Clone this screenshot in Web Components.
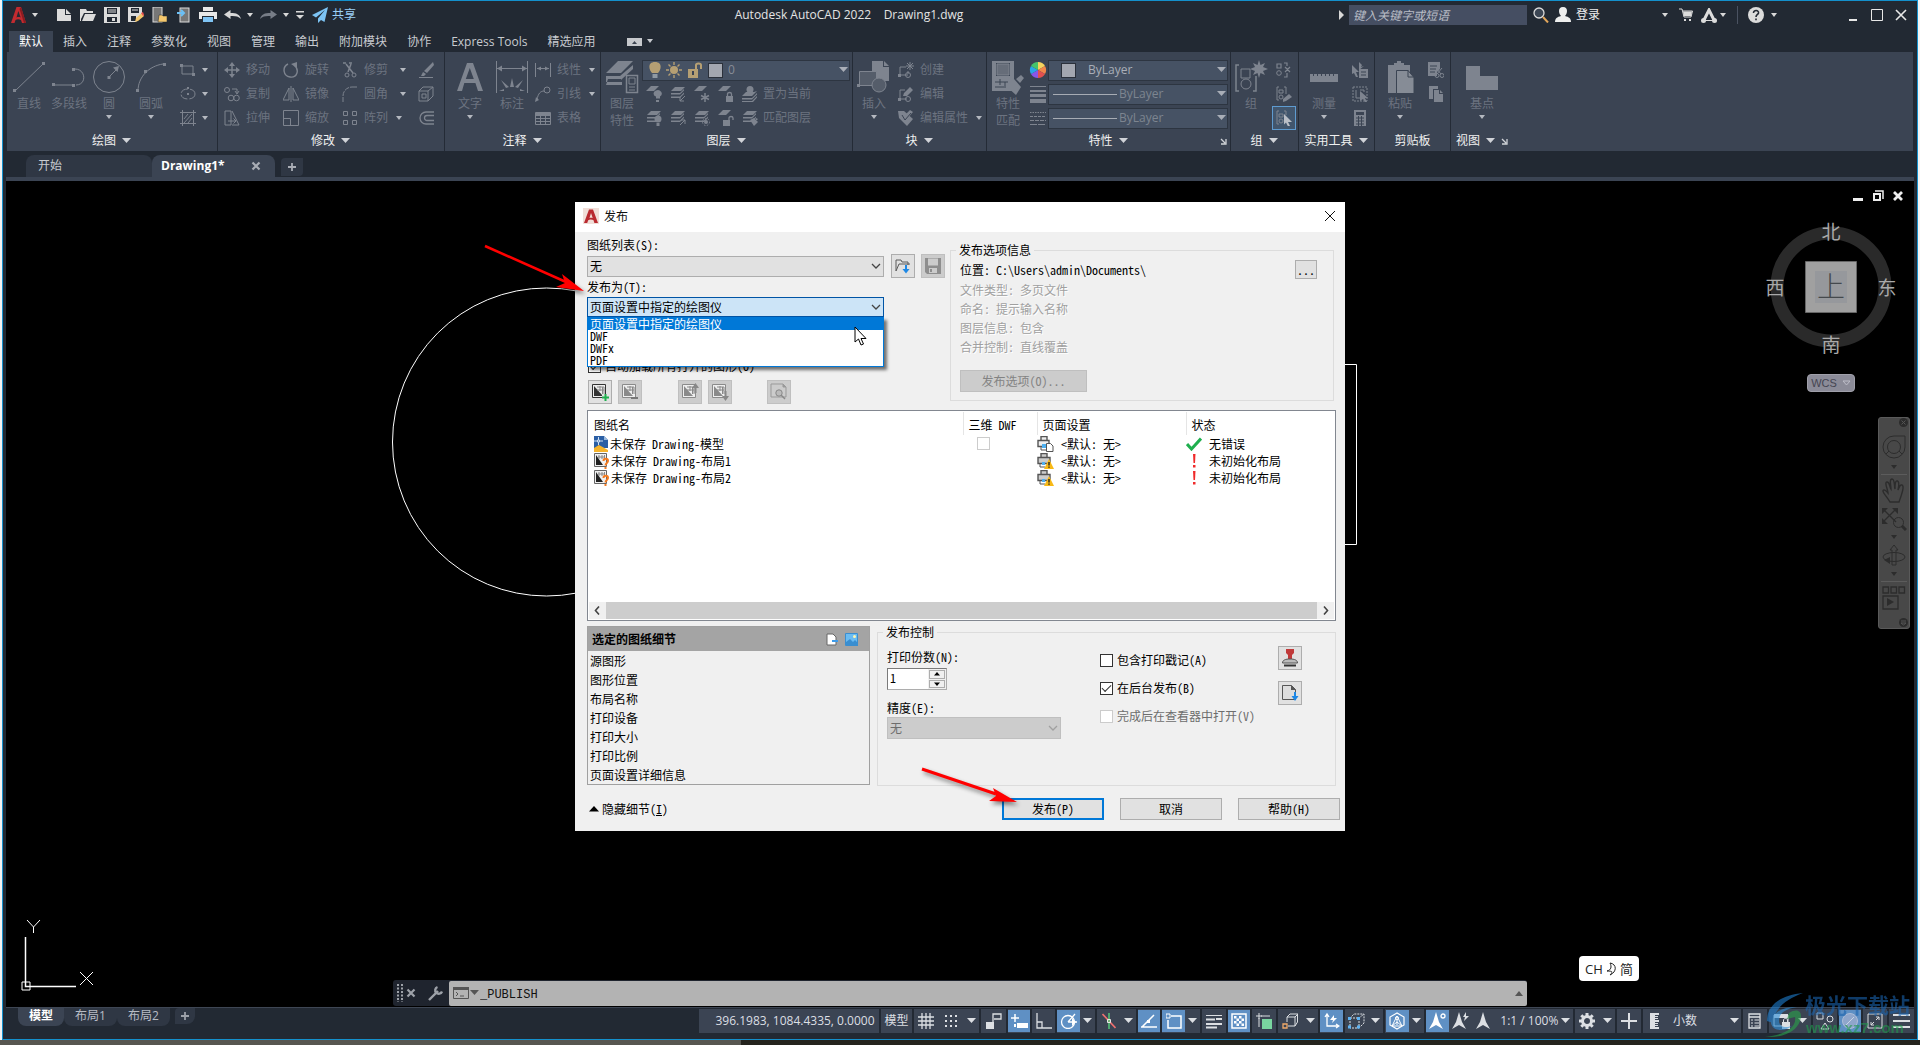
<!DOCTYPE html>
<html lang="zh-CN">
<head>
<meta charset="utf-8">
<title>Autodesk AutoCAD 2022 - Drawing1.dwg</title>
<style>
html,body{margin:0;height:100%}
body{background:linear-gradient(#f4f4f4,#f4f4f4) left top/100% calc(100% - 5px) no-repeat,linear-gradient(90deg,#575650 0 741px,#24231d 741px);overflow:hidden;
font-family:"Open Sans","Noto Sans CJK SC",sans-serif;font-size:12px;line-height:16px;color:#e0e0e0}
</style>
</head>
<body>
<cad-app></cad-app>
<script>
const RESET = `*{box-sizing:border-box}
button,input,select{font:inherit;color:inherit;background:none;border:0;padding:0;margin:0;border-radius:0;outline:0}
button{display:inline-flex;align-items:center;justify-content:center}
a{color:inherit;text-decoration:none}`;
const def = (name, css, html, after) => customElements.define(name, class extends HTMLElement {
  connectedCallback() {
    if (this.shadowRoot) return;
    const root = this.attachShadow({mode: 'open'});
    root.innerHTML = `<style>${RESET}${css}</style>${typeof html === 'function' ? html(this) : html}`;
    if (after) after(root, this);
  }
});

/* Icons: [width, height, markup] */
const F = 'fill="currentColor" stroke="none"';
const sheets = (y = 0) => `<g ${F}><path d="M5 ${1+y}h10l-4 4H1z"/><path d="M1 ${7+y}h9l4-4v1.500l-4 4H1z"/><path d="M1 ${10.500+y}h9l4-4V8l-4 4H1z"/></g>`;
const sheet = (tone, badge) => [18, 18, `<path d="M1.500 1.500h13v13h-13z" fill="#eee" stroke="${tone}"/><path d="M3 3v10h9z" fill="${tone}" stroke="none"/><path d="M6 4h7v7M9 3v5M6 7h7M11.500 4v7" stroke="#888"/>${badge}`];
const ICONS = {
  caret: [8, 5, `<path ${F} d="M1 0h6L4 4z"/>`],
  caretbig: [11, 6, `<path ${F} d="M1 0h9L5.500 5z"/>`],
  logo: [16, 18, `<path fill="#c22b30" stroke="none" d="M5.500 1h4.500L15 17h-4l-1-3c-2-1-4-1-5.500 0L3.500 17H0z"/><path fill="#232933" stroke="none" d="M7.300 5 5.500 11.500c1.500-.6 3-.6 4.200 0z"/><path fill="#8a1c20" stroke="none" d="M10 1l5 16h-2L8.500 3z"/>`],
  logodlg: [16, 16, `<path fill="#f0ded8" stroke="none" d="M0 0h16v16H0z"/><path fill="#b92a30" stroke="none" d="M6 1.500h4L15 15h-3.600l-1-3c-2-.8-4-.8-5.200.3L4.200 15H1z"/><path fill="#f0ded8" stroke="none" d="M8 5 6.500 10c1-.4 2.200-.4 3.200 0z"/>`],
  new: [16, 16, `<path fill="#dcdcdc" stroke="none" d="M1 2h8v6h6v6H1zM10 2l5 5h-5z"/>`],
  open: [16, 16, `<path fill="#dcdcdc" stroke="none" d="M0 2h6l1 2h6v2H4L1 12v2H0z"/><path fill="#dcdcdc" stroke="none" d="M5 7h11l-3 7H2z"/>`],
  save: [16, 16, `<path fill="#dcdcdc" stroke="none" fill-rule="evenodd" d="M0 0h16v16H0zM3 1h10v6H3zM3 10h10v5H3z"/><path d="M4 3h8M4 5h8" stroke="#dcdcdc"/><path fill="#dcdcdc" stroke="none" d="M8 11h3v3H8z"/>`],
  saveas: [16, 16, `<path fill="#dcdcdc" stroke="none" fill-rule="evenodd" d="M0 0h14v6l-6 9H0zM3 1h8v5H3zM3 9h5v5H3z"/><path d="M4 3h6" stroke="#dcdcdc"/><path d="m7 15 1-4 6-5 2 3-6 5z" fill="#f4c76d" stroke="none"/><path d="m13 6 2 3 1-1-1-3z" fill="#e55" stroke="none"/>`],
  openweb: [16, 16, `<rect x="1" y="0" width="9" height="15" fill="#777" stroke="#dcdcdc"/><path d="M7 8h3l1 1h4v6H6z" fill="#f4c76d" stroke="#232933" stroke-width=".5"/>`],
  saveweb: [14, 16, `<rect x="3" y="1" width="9" height="14" fill="#777" stroke="#dcdcdc"/><path d="M0 6h6M4 3l3 3-3 3" stroke="#6cc0f5" stroke-width="2"/>`],
  print: [18, 16, `<path fill="#e8e8e8" stroke="none" d="M4 0h10v4H4zM0 5h18v7h-3V9H3v3H0z"/><path fill="#7fc4f5" stroke="none" d="M4 10h10v5H4z"/>`],
  undo: [17, 10, `<path ${F} d="M0 4.500 6.500 0v3c6 0 9 1 10.500 6-3-3-6-3.200-10.500-3v3z"/>`],
  redo: [17, 10, `<path ${F} d="M17 4.500 10.500 0v3C4.500 3 1.500 4 0 9c3-3 6-3.200 10.500-3v3z"/>`],
  custom: [10, 8, `<path ${F} d="M1 0h8v1.500H1zM1 4h8L5 8z"/>`],
  plane: [16, 16, `<path fill="#7cc3f4" stroke="none" d="M16 0 0 8l4 2.500L13 3l-7 8.500V16l3-3 3.500 2z"/>`],
  right: [6, 10, `<path ${F} d="M0 0l5 5-5 5z"/>`],
  search: [16, 16, `<circle cx="6" cy="6" r="5" fill="#3c4654" stroke="#dcdcdc" stroke-width="1.300"/><path d="m10 10 5 5.500" stroke="#e2a65b" stroke-width="2"/>`],
  user: [16, 16, `<path ${F} d="M8 0c3 0 4 2 4 4s-1 4-2 5c4 1 6 2.500 6 6H0c0-3.500 2-5 6-6-1-1-2-3-2-5s1-4 4-4z"/>`],
  cart: [14, 14, `<path d="M0 1h3l2 8h7l1.500-6H4" stroke="#dcdcdc"/><path fill="#dcdcdc" stroke="none" d="M4 3.500h9l-1 4.500H5zM5 11h2v2H5zM10 11h2v2h-2z"/>`],
  autodesk: [16, 15, `<path d="M3 12 8 2l5 10" stroke="#dcdcdc" stroke-width="3"/><path d="M3 12.500h10" stroke="#dcdcdc"/><circle cx="2.500" cy="12.500" r="2.500" fill="#dcdcdc" stroke="none"/><circle cx="13.500" cy="12.500" r="2.500" fill="#dcdcdc" stroke="none"/>`],
  help: [18, 18, `<circle cx="9" cy="9" r="8" fill="#dcdcdc" stroke="none"/><path d="M6.500 7c0-3.500 5.500-3 5 0-.3 1.500-2.500 1.500-2.500 4M9 12.500v1.800" stroke="#232933" stroke-width="1.600"/>`],
  min: [12, 14, `<path d="M2 12h8" stroke="#e8e8e8" stroke-width="2"/>`],
  max: [14, 12, `<path d="M1.500.5h11v11h-11z" stroke="#e8e8e8"/>`],
  close: [12, 12, `<path d="m1 1 10 10M11 1 1 11" stroke="#e8e8e8" stroke-width="1.600"/>`],
  ribbonmin: [15, 8, `<path fill="#c6c8cc" stroke="none" d="M0 0h15v8H0z"/><path fill="#3c4350" stroke="none" d="M5 6l2.500-3L10 6z"/>`],
  line: [34, 34, `<path d="M3 31 31 4"/><path ${F} d="M1 29h3v3H1zM30 2h3v3h-3z"/>`],
  pline: [34, 34, `<path d="M2 25h20M23 9c11 0 12 16 1 16"/><path ${F} d="M0 23h3v3H0zM20 24h3v3h-3zM20 8h3v3h-3z"/>`],
  circle: [34, 34, `<circle cx="17" cy="17" r="15.500"/><path d="M17 17 26 8"/><path ${F} d="M15.500 16h3v3h-3zM27 6l-1.500 6L21 7.500z"/>`],
  arc: [34, 34, `<path d="M4 31C4 17 15 6 29 4"/><path ${F} d="M2 29h3v3H2zM10 10h3v3h-3zM29 3h3v3h-3z"/>`],
  rect: [16, 16, `<path d="M2 4h11M2 4v8h11V4"/><path ${F} d="M0 2h3v3H0zM12 11h3v3h-3z"/>`],
  ellipse: [16, 16, `<ellipse cx="8" cy="8" rx="7" ry="5" stroke-dasharray="8 2"/><path ${F} d="M7 7h2v2H7zM7 1h2v2H7z"/>`],
  hatch: [16, 16, `<path d="M2.500 0v16M13.500 0v16M0 2.500h16M0 13.500h16M4 9l4-5M4 13l8-9M8 13l4-5"/>`],
  move: [16, 16, `<path d="M8 2v12M2 8h12" stroke-width="1.500"/><path ${F} d="M8 0l3 4H5zM8 16l-3-4h6zM0 8l4-3v6zM16 8l-4 3V5z"/>`],
  copy: [16, 16, `<circle cx="3" cy="4" r="2.500"/><circle cx="7" cy="12" r="2.800"/><circle cx="12.500" cy="12" r="2.800"/><path d="M8 3h5v4M11 5l2 3 2-3"/>`],
  stretch: [16, 16, `<path d="M1 1h6v14H1zM8 1l7 14H8M4 11h8M9.500 8.500 12 11l-2.500 2.500"/>`],
  rotate: [16, 16, `<path d="M5 2C-1 5 0 14 7 15s10-7 4-12" stroke-width="1.400"/><path ${F} d="M14 0v6L8 2z"/>`],
  mirror: [16, 16, `<path d="M6 2v12H0zM10 2v12h6zM8 0v16"/>`],
  scale: [16, 16, `<path d="M.5.5h15v15H.5zM.5 8.500h7v7"/>`],
  trim: [16, 16, `<path d="M1 1h3M7 1h3M4 2l7 9M9 2 6 10" stroke-width="1.500"/><circle cx="5" cy="13" r="2"/><circle cx="12" cy="13" r="2"/>`],
  fillet: [16, 16, `<path d="M1 16v-6M1 10C1 5 5 1 10 1M10 1h6" stroke-dasharray="5 1"/>`],
  array: [16, 16, `<path d="M1.500 1.500h4v4h-4zM10.500 1.500h4v4h-4zM1.500 10.500h4v4h-4zM10.500 10.500h4v4h-4z"/>`],
  erase: [16, 16, `<path ${F} d="m15 0 1 3-7 8-3-2zM5 10l3 2-2 2H3zM1 15h14v1H1z"/>`],
  explode: [16, 16, `<path d="M1 5h9v10H1zM1 5l4-4h10v9l-5 5M10 5l5-4M4 8h4v4H4z"/>`],
  offset: [16, 16, `<path d="M16 2H8a6 6 0 0 0 0 12h8M16 5.500H9a2.500 2.500 0 0 0 0 5h7" stroke-width="1.300"/>`],
  text: [30, 34, `<path ${F} d="M12 3h6l10 28h-5l-2.600-8H9.300L7 31H2zM14.800 8l-4 11h8z"/>`],
  dim: [34, 34, `<path d="M1.500 1v32M32.500 1v32M2 8.500h30"/><path ${F} d="M2 8.500l5-3v6zM32 8.500l-5 3v-6zM15 27l2-9 2 9zM11 28 6 20l8 7zM23 28l5-8-8 7zM9 31H4l5-2zM25 31h5l-5-2z"/>`],
  linear: [16, 16, `<path d="M.5 1v14M15.500 1v14M2 6.500h12"/><path ${F} d="M2 6.500l4-2v4zM14 6.500l-4 2v-4z"/>`],
  leader: [16, 16, `<path d="M2 14C3 7 6 5 9 5"/><circle cx="12" cy="4" r="3"/><path ${F} d="M0 16l1-5 3 3z"/>`],
  table: [16, 16, `<path d="M.5 2.500h15v12H.5zM1 5.500h14M1 8.500h14M1 11.500h14M5.500 5v9M10.500 5v9"/><path ${F} d="M1 2h14v3H1z"/>`],
  layerprop: [34, 36, `<g ${F}><path d="M13 2h15L16 14H1zM1 17h14l13-11v4L17 20v3H1zM1 26h16v-5l-1-1H3z"/></g><path d="M21.500 16.500h11v17h-11z" fill="#3b4453" stroke-width="1.500"/><path d="M24 19h6v6h-6zM24 28h6M24 31h6"/>`],
  bulb: [12, 16, `<path fill="#b59f73" stroke="none" d="M6 0c8 0 6 8 3 11H3C0 8-2 0 6 0z"/><path fill="#8f99a3" stroke="none" d="M3.500 12h5v4h-5z"/>`],
  sun: [16, 16, `<circle cx="8" cy="8" r="4" fill="#b59f73" stroke="none"/><path d="M8 0v3M8 13v3M0 8h3M13 8h3M2.500 2.500l2 2M11.500 11.500l2 2M13.500 2.500l-2 2M4.500 11.500l-2 2" stroke="#b59f73" stroke-width="1.400"/>`],
  unlock: [16, 16, `<path fill="#b59f73" stroke="none" d="M1 7h10v9H1z"/><path d="M9 7V3c0-2 5-2 5 0v4" stroke="#b59f73" stroke-width="2"/><path fill="#3a4352" stroke="none" d="M5 9h2v4H5z"/>`],
  lOff: [16, 16, `<g ${F}><path d="M5 0h8L8 5H0zM8 9a4 3.500 0 1 1 6 1.500v2h-4v-2C8 10 8 9 8 9zM10 14h3v2h-3z"/></g>`],
  lIso: [16, 16, sheets() + `<path d="M10 15l5-5M10 11v4h4"/>`],
  lFrz: [16, 16, `<path ${F} d="M5 0h8L8 5H0z"/><path d="M11 7v9M7 9.500l8 4M15 9.500l-8 4" stroke-width="1.500"/>`],
  lLock: [16, 16, `<path ${F} d="M5 0h8L8 5H0zM8 10h7v6H8z"/><path d="M9.500 10V8c0-2 4-2 4 0v2" stroke-width="1.300"/>`],
  lCur: [16, 16, `<g ${F}><circle cx="8" cy="3.500" r="3.500"/><path d="M4 6h8l3-1-5 5H0zM0 12h10l5-5v1.500l-5 5H0zM0 15h10l5-5v1.500L11 16H0z"/></g>`],
  lOn: [16, 16, sheets() + `<circle cx="12" cy="9" r="3.500" ${F}/><path ${F} d="M10.500 13h3v3h-3z"/>`],
  lUniso: [16, 16, sheets() + `<path d="M10 15l5-5M11 10h4v4"/>`],
  lThaw: [16, 16, sheets() + `<circle cx="12" cy="12" r="2" ${F}/><circle cx="12" cy="12" r="3.500" stroke-dasharray="1.500 1.500"/>`],
  lUnlock: [16, 16, `<path ${F} d="M5 0h8L8 5H0zM5 10h7v6H5z"/><path d="M11 10V8c0-2 4-2 4 0v2" stroke-width="1.300"/>`],
  lMatch: [16, 16, sheets() + `<path ${F} d="M8 10l4 6 4-4-4-4zM14 8l2 1-2 2z"/>`],
  insert: [34, 34, `<path ${F} d="M15 1h11v6h6v14H15z"/><path ${F} d="M27 1l5 5h-5z"/><path d="M2.500 11.500h17v14h-17z" fill="#555d6a"/><circle cx="22" cy="25" r="7" fill="#555d6a"/><path ${F} d="M0 24h3v3H0z"/>`],
  create: [16, 16, `<path d="M2 13V5h6M2 13h8M10 12V9"/><circle cx="10" cy="13" r="2.500"/><path d="M12 0v8M8 4h8M9 1l6 6M15 1 9 7"/><path ${F} d="M0 12h3v3H0z"/>`],
  bedit: [16, 16, `<path d="M2 13V4h5M2 13h7"/><circle cx="10" cy="13" r="2.500"/><path ${F} d="M0 12h3v3H0zM5 10l1-3 6-6 3 3-6 6z"/>`],
  attr: [16, 16, `<path ${F} d="M0 1h6l9 8-6 7L1 8zM6 6l6-6 3 2-6 7z"/><path stroke="#3b4453" d="M4 5l3 5M7 10l6-7"/>`],
  matchprop: [34, 36, `<path ${F} fill-rule="evenodd" d="M1 2h22v30H1zM5 4v13h14V4zM5 26h6M5 21h14"/><path d="M6 5h12v11H6z" fill="#666d79"/><path d="M4 23h13M4 28h9M9 20v6M14 23v6" stroke="#3b4453"/><path ${F} d="M15 27l8-7 7 8-5 8zM25 20l5-4 3 3-4 5z" stroke="#3b4453"/>`],
  wheel: [18, 18, `<g stroke="none"><path fill="#f4d35e" d="M9 9V1a8 8 0 0 1 7 4z"/><path fill="#f2874a" d="M9 9l7-4a8 8 0 0 1 0 8z"/><path fill="#e2504f" d="M9 9l7 4a8 8 0 0 1-7 4z"/><path fill="#8a56e8" d="M9 9v8a8 8 0 0 1-7-4z"/><path fill="#2aa7e8" d="M9 9l-7 4a8 8 0 0 1 0-8z"/><path fill="#45c46b" d="M9 9 2 5a8 8 0 0 1 7-4z"/></g>`],
  lweight: [18, 18, `<path ${F} d="M1 1h16v1H1zM1 5h16v2H1zM1 9h16v3H1zM1 14h16v4H1z"/>`],
  ltype: [18, 18, `<path d="M1 3.500h16" stroke-dasharray="1.500 1"/><path d="M1 7.500h16" stroke-dasharray="3 1"/><path d="M1 11.500h16" stroke-dasharray="4 1"/><path d="M1 15.500h16" stroke-dasharray="7 1"/>`],
  group: [34, 34, `<path d="M5 5H2v26h3M19 31h3V16" stroke-width="1.500"/><path d="M7 9h9v9H7z"/><circle cx="12" cy="24" r="5"/><path ${F} d="m25 0 1.500 5L31 3l-2 4 5 2-5 2 2 4-4.500-2L25 18l-1.500-5-4.500 2 2-4-5-2 5-2-2-4 4.500 2z"/>`],
  ungroup: [16, 16, `<path d="M1 2h4v4H1zM8 1h3v3M8 15h3v-4M9 5l5 5M14 5l-5 5" stroke-width="1.200"/><circle cx="3" cy="11" r="2.300"/>`],
  gedit: [16, 16, `<path d="M3 1H1v13h2M8 1h2v7M3 4h4v3H3z"/><circle cx="5" cy="11" r="2"/><path ${F} d="M7 16v-3l6-5 3 3-6 4z"/>`],
  gsel: [16, 16, `<path d="M3 1H1v13h2M8 1h2v4M3 4h4v3H3z"/><circle cx="5" cy="11" r="2"/><path fill="#b9bec6" stroke="none" d="M8 4l8 8h-4l2 4-2 .5-2-4-2 2z"/>`],
  measure: [30, 34, `<path ${F} d="M1 14h28v8H1z"/><path stroke="#3b4453" d="M4.500 13v3M8.500 13v3M12.500 13v3M16.500 13v3M20.500 13v3M24.500 13v3"/>`],
  qsel: [16, 16, `<path ${F} d="M0 3l7 7H4l2 5H4l-2-4-2 1zM7 0l3 3-1 2 3-1-5 4zM7 7h9v9H7z"/><path stroke="#3b4453" d="M9 10h5M9 13h5"/>`],
  selall: [16, 16, `<path d="M1 1h14v14H1z" stroke-dasharray="2 1"/><path d="M4 4v8h4M8 4h4v2"/><path ${F} d="M8 5l8 7h-3l2 4h-2l-2-3-3 2z"/>`],
  calc: [16, 16, `<path ${F} fill-rule="evenodd" d="M2 0h12v16H2zM4 2v3h8V2z"/><path stroke="#3b4453" d="M4 8h8M4 11h8M4 14h8M6.500 6v10M9.500 6v10"/>`],
  paste: [30, 34, `<path ${F} d="M3 5h22v8H12v20H3zM9 3h3V1h4v2h3v4H9z"/><path fill="#868c96" stroke="#3b4453" d="M11.500 10.500H23l6 7v16H11.500z"/><path stroke="#3b4453" d="M23 10v7h6"/>`],
  cut: [16, 16, `<path ${F} d="M0 0h12v7l-3 3v4H0z"/><path stroke="#3b4453" d="M2 4h7M2 7h6M2 10h5"/><path d="M8 6l5 6M14 6l-5 6" /><circle cx="9" cy="13.500" r="2"/><circle cx="14" cy="13.500" r="2"/>`],
  copyclip: [16, 16, `<path ${F} d="M1 0h9v3H5v10H1z"/><path ${F} d="M6 4h5v4h4v8H6zM12 4l3 3h-3z"/>`],
  base: [34, 34, `<path ${F} d="M1 6h14v10h18v14H1z"/>`],
  launch: [7, 7, `<path d="M1 1l4 4M6 1v5H1" stroke-width="1.300"/>`],
  xtab: [10, 10, `<path d="m1.500 1.500 7 7M8.500 1.500l-7 7" stroke-width="2.200"/>`],
  plus: [10, 10, `<path d="M5 1v8M1 5h8" stroke-width="1.800"/>`],
  mdimin: [12, 12, `<path fill="#eee" stroke="none" d="M1 8h10v3H1z"/>`],
  mdimax: [12, 12, `<path d="M3 1h8v8" stroke="#eee" stroke-width="1.500"/><path d="M2 4h6v6H2z" stroke="#eee" stroke-width="2"/>`],
  mdiclose: [12, 12, `<path d="m2 2 8 8M10 2 2 10" stroke="#eee" stroke-width="2.800"/>`],
  steer: [24, 24, `<path d="M12 1h11v11A11 11 0 1 1 12 1z"/><circle cx="12" cy="12" r="6.500"/><path d="m7 16-3 3M17 16l3 3"/>`],
  hand: [26, 26, `<path stroke-width="1.400" d="M9 24C6 19 2 15 2 13s3-1 5 2c0-3-4-11-1-11s2 4 4 7c0-3-2-10 1-10s2 7 3 10c0-3 0-9 2.500-8s1 6 .5 9c1-2 2-6 4-5 3 1-1 11-3 17z"/>`],
  zoom: [26, 26, `<path d="m2 3 13 13M2 16 15 3" stroke-width="1.300"/><path ${F} d="M1 2h6L1 8zM17 2v6l-6-6zM1 18v-6l6 6z"/><circle cx="17.500" cy="16.500" r="5"/><path d="m21 20 4 4" stroke-width="3"/>`],
  orbit: [26, 26, `<path d="M13 2l4 5h-2v15h-4V7H9z"/><ellipse cx="13" cy="14" rx="11" ry="4.500"/><path ${F} d="M3 17l6-3v7z"/>`],
  motion: [26, 26, `<path d="M2 2h5.500v6H2zM10 2h5.500v6H10zM18 2h5.500v6H18zM2 11h15v13H2z" stroke-width="1.300"/><path ${F} d="M6 13l7 4-7 4z"/>`],
  navx: [9, 9, `<circle cx="4.500" cy="4.500" r="4.500" ${F}/><path stroke="#555" d="m2.500 2.500 4 4M6.500 2.500l-4 4"/>`],
  navm: [9, 9, `<circle cx="4.500" cy="4.500" r="4.500" ${F}/><path stroke="#555" d="M2 3h5M2 5h5L4.500 7z"/>`],
  grip: [6, 18, `<path stroke-width="2" stroke-dasharray="2 1.500" d="M1 0v18M5 0v18"/>`],
  wrench: [16, 16, `<path d="M1 15 10 6" stroke-width="2.400"/><path d="M14 6.500A3.500 3.500 0 1 1 9.500 2" stroke-width="2.400"/>`],
  prompt: [16, 12, `<path d="M.5.5h15v11H.5z"/><path ${F} d="M0 0h16v3H0z"/><path d="m3 5 2 2-2 2M7 9h4"/>`],
  up: [8, 5, `<path ${F} d="M0 5l4-5 4 5z"/>`],
  grid: [16, 16, `<path d="M4 0v16M8 0v16M12 0v16M0 4h16M0 8h16M0 12h16" stroke-width="1.300"/>`],
  snap: [14, 14, `<path stroke-width="2" stroke-dasharray="2 3" d="M1 2h12M1 7h12M1 12h12"/>`],
  infer: [16, 16, `<path ${F} d="M0 9h8v7H0z"/><path d="M7 10V1h8v5H8" stroke-width="1.300"/>`],
  dyn: [18, 16, `<path d="M5 1v8M1 5h8" stroke-width="1.500"/><path ${F} d="M7 10h11v5H7zM4 11h2v3H4z"/>`],
  ortho: [16, 16, `<path d="M1 0v15h15M1 9h5v6" stroke-width="1.300"/>`],
  polar: [18, 16, `<circle cx="8" cy="9" r="6.500" stroke-width="1.300"/><path d="M8 9h9M8 9l7-8" stroke-width="1.300"/><path ${F} d="M12 5l4 4-4 4z"/>`],
  iso: [14, 16, `<path stroke="#f07070" stroke-width="1.600" d="M.5 1l13 14"/><path stroke="#58d17b" stroke-width="1.400" d="M7 0v16"/><path d="M5.500 6.500h3v3h-3z" stroke="#e8e8e8"/>`],
  otrack: [18, 16, `<path d="M2 14 14 2M1 14h16" stroke-width="1.500"/><path ${F} d="M7 7h3v3H7z"/>`],
  osnap: [16, 16, `<path d="M5 3h10v12H2V7" stroke-width="1.500"/><path d="M0 1h4v4H0z"/>`],
  lw: [16, 16, `<path d="M0 2.500h16" stroke-width="1"/><path d="M0 6.500h9M10 6h6" stroke-width="2"/><path d="M0 11h16M0 14.500h11" stroke-width="2"/>`],
  trans: [16, 16, `<path d="M1 1h14v14H1z" stroke-width="1.500"/><path ${F} d="M3 3h2.500v2.500H3zM8 3h2.500v2.500H8zM5.500 5.500H8V8H5.500zM10.500 5.500H13V8h-2.500zM3 8h2.500v2.500H3zM8 8h2.500v2.500H8zM5.500 10.500H8V13H5.500zM10.500 10.500H13V13h-2.500z"/>`],
  cycle: [16, 16, `<path d="M3 0v6M0 3h6M5 3h9M3 5v9"/><path fill="#79d6a0" stroke="none" d="M6 6h10v10H6z"/>`],
  osnap3: [16, 16, `<path d="M5 4h8v9H6M5 4v5M5 4l3-3h8l-3 3M15.500 1v8L13 13"/><path stroke="#f0a96a" stroke-width="1.300" d="M1 11h4v4H1z"/>`],
  ducs: [16, 18, `<path d="M3 3v11h11M1 5l2-3 2 3M12 12l3 2-3 2" stroke-width="1.300"/><path ${F} d="M10 3 6 8h3l-1 3 5-5h-3z"/>`],
  selfilt: [18, 16, `<path d="M2 5h9v10H2zM2 5l4-4h10v9l-5 5M11 5l5-4" stroke-dasharray="2 1"/><path stroke="#5fb4f5" stroke-width="3" d="M0 5.500h3M0 14h3M9 14h3M9 5.500h3"/>`],
  gizmo: [18, 18, `<path d="M9 1 2 5v8l7 4 7-4V5z" stroke-width="1.200"/><circle cx="9" cy="6" r="1.500"/><path d="M9 7v6M9 10l-5 4M9 10l5 4M4 14h10L9 4z"/>`],
  annovis: [18, 18, `<path ${F} d="M7 0l3 10 4 7-7-4-7 4 4-7z"/><circle cx="14" cy="4" r="2" stroke-width="1.300"/>`],
  annoauto: [18, 18, `<path ${F} d="M7 0l3 10 4 7-7-4-7 4 4-7zM14 0l-3 5h2l-1 4 5-5h-3z"/>`],
  anno: [16, 18, `<path ${F} d="M7 0l3 10 4 7-7-4-7 4 4-7z"/>`],
  gear: [16, 16, `<circle cx="8" cy="8" r="4.500" stroke-width="3"/><path stroke-width="3" d="M8 0v3M8 13v3M0 8h3M13 8h3M2.300 2.300l2 2M11.700 11.700l2 2M13.700 2.300l-2 2M4.300 11.700l-2 2"/>`],
  bigplus: [16, 16, `<path d="M8 0v16M0 8h16" stroke-width="2"/>`],
  units: [10, 16, `<path ${F} d="M0 0h9v2H5v1h3v1H5v1h3v1H5v1h4v2H5v1h3v1H5v1h3v1H5v1h4v2H0z"/>`],
  qprops: [14, 16, `<path d="M1 1h11v14H1zM1 4h11" stroke-width="1.300"/><path d="M3 7h2M6.500 7H11M3 10h2M6.500 10H11M3 13h2M6.500 13H11"/>`],
  uilock: [18, 16, `<path d="M1 2h14v11H1z"/><path ${F} d="M1 1h14v4H1zM9 9h8v7H9z"/><path d="M10.500 9V7c0-2 4-2 4 0v2"/>`],
  isolate: [18, 18, `<path d="M1 1h6v6H1zM9 11l4 6H5z"/><circle cx="14" cy="7" r="3"/>`],
  hw: [18, 18, `<circle cx="9" cy="9" r="7.500" fill="#8fa6cb" stroke="#aebdd8"/><path stroke="#c9d4e6" d="M5 13l8-8"/>`],
  full: [16, 16, `<path d="M1 1h14v14H1zM9 4h3v3M12 4 9 7M7 12H4V9M4 12l3-3"/>`],
  menu: [18, 16, `<path d="M0 2h17M0 8h17M0 14h17" stroke-width="2"/>`],
  chev: [10, 8, `<path d="m1 2 4 4 4-4" stroke-width="1.300"/>`],
  dclose: [12, 12, `<path d="m1 1 10 10M11 1 1 11" stroke="#111"/>`],
  dload: [18, 18, `<path d="M2 14V3h5l1 2h6v3M2 14l3-7h11" stroke="#5a5a5a"/><path stroke="#1e88e5" stroke-width="2" d="M12 8v6"/><path fill="#1e88e5" stroke="none" d="M8.500 12h7L12 16.500z"/>`],
  dsave: [18, 18, `<path fill="#8e8e8e" stroke="none" fill-rule="evenodd" d="M1 1h16v16H3l-2-2zM4 1.500h10v7H4zM5 11h8v5H5z"/><path fill="#8e8e8e" stroke="none" d="M6 12h2v3H6z"/>`],
  sheetadd: sheet('#333', '<path d="M11 11h7v7h-7z" fill="#e1e1e1" stroke="none"/><path d="M14.500 11v7M11 14.500h7" stroke="#1faf4e" stroke-width="2"/>'),
  sheetdel: sheet('#8a8a8a', '<path d="M10 15h7" stroke="#777" stroke-width="2"/>'),
  sheetup: sheet('#8a8a8a', '<path d="M14.500 4v6" stroke="#888" stroke-width="2"/><path d="M11 5h7l-3.500-5z" fill="#888" stroke="none"/>'),
  sheetdown: sheet('#8a8a8a', '<path d="M14.500 8v6" stroke="#888" stroke-width="2"/><path d="M11 13h7l-3.500 5z" fill="#888" stroke="none"/>'),
  dpreview: [18, 18, `<path d="M1 1h12l3 3v10H1z" stroke="#999"/><path d="M13 1v3h3" fill="#999" stroke="#999"/><circle cx="9" cy="10" r="3.200" stroke="#888" fill="#bbb"/><path d="m11 12 4 4" stroke="#888" stroke-width="1.500"/>`],
  smodel: [15, 16, `<path fill="#2b5fa5" stroke="none" d="M0 0h10l4 4v8H0z"/><path fill="#9bb9dc" stroke="none" d="M10 0l4 4h-4z"/><path fill="#f6b42c" stroke="none" d="M0 16v-4l5-3 9 5v2z"/><path stroke="#cfe0f5" d="M4.500 1v8M0 5h9"/><path fill="#2b5fa5" stroke="#cfe0f5" d="M3.500 4h2v2h-2z"/>`],
  slayout: [16, 16, `<path d="M.5.5h12v13H.5z" fill="#f0f0f0" stroke="#666"/><path fill="#222" stroke="none" d="M2 2v10h7z"/><path stroke="#888" d="M5 2v4M8 2v4M10.500 2v4M4 4h7"/><path d="M9.500 8c0-3 4.500-3 4.500 0 0 2-2.500 2-2.500 4.500M11.500 14v2" stroke="#f47b20" stroke-width="2"/>`],
  pset: [17, 16, `<path d="M4 4V.500h6V4M1 4.500h11v6H1z" fill="#eee" stroke="#555" stroke-width="1.400"/><path fill="#4fb0f0" stroke="none" d="M5 8h4v4H5z"/><path d="M4 10v4h5" stroke="#555"/><path d="M9.500 7.500h4l2.500 2.500v5.500H9.500z" fill="#fff" stroke="#555"/>`],
  psetw: [17, 16, `<path d="M4 4V.500h6V4M1 4.500h12v6H1z" fill="#ccc" stroke="#555" stroke-width="1.400"/><path fill="#4fb0f0" stroke="none" d="M5 9h3v3H5z"/><path d="M3 10v4h5" stroke="#555"/><path d="M12 6l5 10H7z" fill="#f8b916" stroke="none"/><path d="M12 9v3.500M12 13.500v1.200" stroke="#222" stroke-width="1.400"/>`],
  ok: [16, 14, `<path d="m1 7 4.500 5L15 1.500" stroke="#1faf4e" stroke-width="3"/>`],
  bang: [16, 14, `<path d="M7 0h2.500L9 9H7.500z" fill="#f02a2a" stroke="none"/><path d="M7 11h2.500v2.500H7z" fill="#f02a2a" stroke="none"/>`],
  sl: [6, 9, `<path d="M5 .5 1.500 4.500 5 8.500" stroke="#444" stroke-width="1.600"/>`],
  sr: [6, 9, `<path d="m1 .5 3.500 4L1 8.500" stroke="#444" stroke-width="1.600"/>`],
  dcopy: [12, 13, `<path d="M1 1h6l3 3v8H1z" fill="#fff" stroke="#666"/><path d="M6 8h6" stroke="#3f9be8" stroke-width="2"/>`],
  dpic: [13, 13, `<path fill="#6bbcf2" stroke="#3a8ed0" d="M.5.5h12v12H.5z"/><path fill="#3a8ed0" stroke="none" d="M1 9l4-3 3 3 2-2 3 3v3H1z"/><circle cx="9.500" cy="3.500" r="1.500" fill="#fff6b0" stroke="none"/>`],
  tri: [10, 6, `<path fill="#000" stroke="none" d="M5 0l5 5.500H0z"/>`],
  spinup: [6, 4, `<path fill="#000" stroke="none" d="M3 0l3 3.500H0z"/>`],
  spindn: [6, 4, `<path fill="#000" stroke="none" d="M3 4l3-3.500H0z"/>`],
  stamp: [18, 18, `<path fill="#c03a3a" stroke="none" d="M5 0h8v4l-2 2v4H7V6L5 4z"/><path fill="#bbb" stroke="#555" d="M1.500 14c0-3 3-4 7.500-4s7.500 1 7.500 4z"/><path stroke="#333" stroke-width="2" d="M3 16.500h12"/>`],
  dexport: [18, 18, `<path d="M1.500 1.500h9l4 4v10h-13z" fill="#ddd" stroke="#555"/><path d="M10 1l5 5h-5z" fill="#555" stroke="none"/><path stroke="#1e88e5" stroke-width="2" d="M14 8v6"/><path fill="#1e88e5" stroke="none" d="M10.500 12h7L14 17z"/>`],
};
customElements.define('cad-icon', class extends HTMLElement {
  connectedCallback() {
    if (this.shadowRoot) return;
    const [w, h, body] = ICONS[this.getAttribute('name')];
    this.attachShadow({mode: 'open'}).innerHTML =
      `<style>:host{display:inline-flex;flex:none;justify-content:center}svg{display:block}</style>
      <svg width="${w}" height="${h}" viewBox="0 0 ${w} ${h}" fill="none" stroke="currentColor" aria-hidden="true">${body}</svg>`;
  }
});
const ic = n => `<cad-icon name="${n}"></cad-icon>`;

def('cad-titlebar', `
:host{display:flex;align-items:center;height:30px;padding:0 4px 2px 6px;position:relative;color:#d8d8d8}
.qat,.right{display:flex;align-items:center}
.qat button{width:24px;height:24px}
.qat button.n{width:12px}
.qat .logo{width:20px}.qat .lc{width:12px;margin-right:11px}
.share{gap:4px;color:#9bd0f7}
.qat .share{width:auto;margin-left:6px}
.title{position:absolute;left:0;right:0;top:6px;text-align:center;white-space:pre;color:#e4e4e4;pointer-events:none;padding-right:222px}
.right{margin-left:auto}
.right input{width:178px;height:20px;background:#454e62;padding:0 4px;font-style:italic;margin:0 6px 0 4px}
.right input::placeholder{color:#b9bdc6;opacity:1}
.login{gap:5px;margin:0 59px 0 6px;color:#eee}
.c{width:12px}.a{margin:0 8px 0 8px}
.h{margin-left:3px}
.sep{width:1px;height:18px;background:#4a5261;margin:0 9px 0 8px}
.w{width:24px}.ws{margin-left:61px;display:flex;align-items:center}
`, `
<div class="qat"><button class="logo" aria-label="应用程序">${ic('logo')}</button><button class="lc">${ic('caret')}</button>
<button>${ic('new')}</button><button>${ic('open')}</button><button>${ic('save')}</button><button>${ic('saveas')}</button><button>${ic('openweb')}</button><button>${ic('saveweb')}</button><button>${ic('print')}</button>
<button>${ic('undo')}</button><button class="n">${ic('caret')}</button><button style="color:#777d87">${ic('redo')}</button><button class="n">${ic('caret')}</button><button class="n" style="margin-left:2px">${ic('custom')}</button>
<button class="share">${ic('plane')}<span>共享</span></button></div>
<div class="title">Autodesk AutoCAD 2022    Drawing1.dwg</div>
<div class="right">${ic('right')}<input aria-label="搜索" placeholder="键入关键字或短语">${ic('search')}
<button class="login">${ic('user')}<span>登录</span></button><button class="c">${ic('caret')}</button><button class="a">${ic('cart')}</button><button>${ic('autodesk')}</button><button class="c">${ic('caret')}</button>
<span class="sep"></span><button>${ic('help')}</button><button class="c h">${ic('caret')}</button>
<div class="ws"><button class="w">${ic('min')}</button><button class="w">${ic('max')}</button><button class="w">${ic('close')}</button></div></div>`);

def('ribbon-tabs', `
:host{display:flex;height:21px;padding-left:6px;color:#c8cbd0}
a{padding:3px 10px 0;height:21px;line-height:16px}
a.on{background:#3b4453;color:#fff}
button{gap:4px;margin-left:22px}
`, `${['默认','插入','注释','参数化','视图','管理','输出','附加模块','协作','Express Tools','精选应用'].map((t, i) => `<a href="#" ${i ? '' : 'class="on"'}>${t}</a>`).join('')}
<button aria-label="最小化功能区">${ic('ribbonmin')}${ic('caret')}</button>`);

def('tool-big', `
:host{display:block;width:var(--w,40px);flex:none}
button{flex-direction:column;width:100%;height:72px;justify-content:flex-start;color:#7e848f}
.i{height:37px;display:flex;align-items:center}
.l{line-height:17px;color:#6c7380;text-align:center;white-space:nowrap}
.c{color:#b5b9c0;line-height:0;margin-top:3px}
`, el => `<button><span class="i">${ic(el.getAttribute('icon'))}</span><span class="l"><slot></slot></span>${el.hasAttribute('more') ? `<span class="c">${ic('caret')}</span>` : ''}</button>`);

def('tool-row', `
:host{display:flex;align-items:center;height:24px}
button{gap:6px;color:#7e848f;height:24px;white-space:nowrap}
.l{color:#6c7380}
.c{color:#b5b9c0;margin-left:5px}
:host([tight]) .c{margin-left:1px}
:host([bare]) button{gap:0}
:host([on]) button{width:24px;border:1px solid #5e9bd0;background:#42566d}
`, el => `<button aria-label="${el.getAttribute('icon')}">${ic(el.getAttribute('icon'))}${el.hasAttribute('bare') ? '' : '<span class="l"><slot></slot></span>'}${el.hasAttribute('more') ? `<cad-icon class="c" name="caret"></cad-icon>` : ''}</button>`);

def('ribbon-panel', `
:host{display:flex;flex-direction:column;flex:0 0 var(--pw);height:99px;border-right:1px solid #242b36;position:relative}
.b{display:flex;height:79px;padding-top:6px}
.t{height:20px;display:flex;align-items:center;justify-content:center;gap:5px;color:#f0f0f0}
.t cad-icon{color:#d0d3d8}
:host([last]){flex:1;border:0}
:host([last]) .t{justify-content:flex-start;padding-left:5px}
:host(:not([last])) .x{position:absolute;right:3px}
`, el => `<div class="b"><slot></slot></div><div class="t">${el.getAttribute('label')}${el.hasAttribute('nocaret') ? '' : ic('caretbig')}${el.hasAttribute('launch') ? `<cad-icon class="x" name="launch"></cad-icon>` : ''}</div>`);

def('prop-combo', `
:host{display:flex;align-items:center;height:21px;background:#465264;border:1px solid #2d3541;padding:0 0 0 6px;color:#a9aeb7}
.s{display:flex;flex:1;align-items:center}
.c{color:#a9aeb7}
`, `<div class="s"><slot></slot></div><cad-icon class="c" name="caretbig"></cad-icon>`);

def('cad-ribbon', `
:host{display:flex;background:#3b4453;margin:0 4px}
.col{display:flex;flex-direction:column}
.r{display:flex;height:24px;align-items:center;color:#7e848f}
.r button{width:24px;height:24px;color:#7e848f}
.t{color:#6c7380;margin-left:1px}
.sw{display:inline-block;width:15px;height:15px;background:#a3a7b0;border:1px solid #2b313b}
.cb{gap:5px;display:flex;align-items:center;color:#868c96}
.ln{width:64px;height:1px;background:#a7acb4;margin-left:-2px}
prop-combo{width:180px}
.dim{color:#7d8590;margin-left:2px}
`, `
<ribbon-panel label="绘图" style="--pw:211px"><tool-big icon="line" style="margin-left:2px">直线</tool-big><tool-big icon="pline">多段线</tool-big><tool-big icon="circle" more>圆</tool-big><tool-big icon="arc" more style="--w:44px">圆弧</tool-big>
<div class="col" style="margin-left:7px"><tool-row bare more icon="rect"></tool-row><tool-row bare more icon="ellipse"></tool-row><tool-row bare more icon="hatch"></tool-row></div></ribbon-panel>
<ribbon-panel label="修改" style="--pw:227px"><div class="col" style="width:59px;margin-left:6px"><tool-row icon="move">移动</tool-row><tool-row icon="copy">复制</tool-row><tool-row icon="stretch">拉伸</tool-row></div>
<div class="col" style="width:59px"><tool-row icon="rotate">旋转</tool-row><tool-row icon="mirror">镜像</tool-row><tool-row icon="scale">缩放</tool-row></div>
<div class="col" style="width:76px"><tool-row more icon="trim">修剪</tool-row><tool-row more icon="fillet">圆角</tool-row><tool-row more tight icon="array">阵列</tool-row></div>
<div class="col"><tool-row bare icon="erase"></tool-row><tool-row bare icon="explode"></tool-row><tool-row bare icon="offset"></tool-row></div></ribbon-panel>
<ribbon-panel label="注释" style="--pw:156px"><tool-big more icon="text" style="margin-left:5px">文字</tool-big><tool-big icon="dim" style="--w:44px">标注</tool-big>
<div class="col" style="margin-left:1px"><tool-row more tight icon="linear">线性</tool-row><tool-row more tight icon="leader">引线</tool-row><tool-row icon="table">表格</tool-row></div></ribbon-panel>
<ribbon-panel label="图层" style="--pw:252px"><tool-big icon="layerprop" style="margin-left:1px">图层<br>特性</tool-big>
<div class="col"><div class="r"><prop-combo style="width:208px"><span class="cb">${ic('bulb')}${ic('sun')}${ic('unlock')}<i class="sw"></i>0</span></prop-combo></div>
<div class="r"><button>${ic('lOff')}</button><button>${ic('lIso')}</button><button>${ic('lFrz')}</button><button>${ic('lLock')}</button><button>${ic('lCur')}</button><span class="t">置为当前</span></div>
<div class="r"><button>${ic('lOn')}</button><button>${ic('lUniso')}</button><button>${ic('lThaw')}</button><button>${ic('lUnlock')}</button><button>${ic('lMatch')}</button><span class="t">匹配图层</span></div></div></ribbon-panel>
<ribbon-panel label="块" style="--pw:134px"><tool-big more icon="insert" style="--w:42px">插入</tool-big><div class="col" style="margin-left:3px"><tool-row icon="create">创建</tool-row><tool-row icon="bedit">编辑</tool-row><tool-row more tight icon="attr">编辑属性</tool-row></div></ribbon-panel>
<ribbon-panel label="特性" launch style="--pw:244px"><tool-big icon="matchprop" style="--w:42px">特性<br>匹配</tool-big>
<div class="col"><div class="r">${ic('wheel')}<prop-combo style="margin-left:1px"><i class="sw" style="margin:0 12px 0 6px"></i>ByLayer</prop-combo></div>
<div class="r">${ic('lweight')}<prop-combo style="margin-left:1px"><i class="ln"></i><span class="dim">ByLayer</span></prop-combo></div>
<div class="r">${ic('ltype')}<prop-combo style="margin-left:1px"><i class="ln"></i><span class="dim">ByLayer</span></prop-combo></div></div></ribbon-panel>
<ribbon-panel label="组" style="--pw:68px"><tool-big icon="group">组</tool-big><div class="col" style="align-items:center;width:26px"><tool-row bare icon="ungroup"></tool-row><tool-row bare icon="gedit"></tool-row><tool-row bare on icon="gsel"></tool-row></div></ribbon-panel>
<ribbon-panel label="实用工具" style="--pw:76px"><tool-big more icon="measure" style="--w:50px">测量</tool-big><div class="col" style="margin-left:3px"><tool-row bare icon="qsel"></tool-row><tool-row bare icon="selall"></tool-row><tool-row bare icon="calc"></tool-row></div></ribbon-panel>
<ribbon-panel label="剪贴板" nocaret style="--pw:76px"><tool-big more icon="paste" style="--w:50px">粘贴</tool-big><div class="col" style="margin-left:3px"><tool-row bare icon="cut"></tool-row><tool-row bare icon="copyclip"></tool-row></div></ribbon-panel>
<ribbon-panel label="视图" launch last><tool-big more icon="base" style="--w:62px">基点</tool-big></ribbon-panel>`);

def('file-tabs', `
:host{display:flex;height:30px;padding:4px 0 0 20px;border-bottom:4px solid #3b4453;margin:0 3px;color:#c8cbd0}
.tab{display:flex;align-items:center;height:22px;background:#2f3744;border-radius:8px 8px 0 0;width:126px;padding:0 12px}
.on{background:#3b4453;color:#fff;font-weight:700;justify-content:space-between;width:123px;padding:0 14px 0 9px}
.on button{color:#a9adb5}
.add{background:#2f3744;width:22px;height:18px;margin:3px 0 0 6px;border-radius:4px 0 4px 0;color:#a9adb5}
`, `<a href="#" class="tab">开始</a><div class="tab on"><span>Drawing1*</span><button aria-label="关闭">${ic('xtab')}</button></div><button class="add" aria-label="新建">${ic('plus')}</button>`);

def('view-cube', `
:host{display:block;position:absolute;top:33px;right:17px;width:132px}
svg{display:block}text{font-family:"Noto Sans CJK SC",sans-serif;font-size:19px;fill:#a9a9a9;text-anchor:middle}
.wcs{width:48px;height:18px;margin:8px 0 0 42px;background:#8b8b98;border-radius:4px;color:#454552;font-family:"Liberation Sans",sans-serif;gap:5px;font-size:11px;border:1px solid #a0a0aa;display:flex}
`, `<svg width="132" height="152" viewBox="0 -10 132 152"><circle cx="66" cy="63" r="54" fill="none" stroke="#2a2a2a" stroke-width="13"/>
<path d="M40.500 37.500h51v51h-51z" fill="#a0a0a0" stroke="#666"/><path d="M50 47h32v32H50z" fill="#96989c"/><text x="66" y="73" style="font-size:28px;fill:#45494d;font-weight:300">上</text>
<text x="66" y="15">北</text><text x="66" y="128">南</text><text x="10" y="71">西</text><text x="122" y="71">东</text></svg>
<button class="wcs">WCS<svg width="9" height="6"><path d="M1 1h7L4.500 5z" fill="none" stroke="#bdbdc8"/></svg></button>`);

def('nav-bar', `
:host{display:flex;flex-direction:column;align-items:center;position:absolute;right:4px;top:236px;width:32px;height:212px;background:#484848;border:1px solid #5a5a5a;border-radius:3px;color:#2c2c2c}
button{height:28px;width:30px;flex:none}.c{height:9px}.e{align-self:flex-end;width:9px;height:9px;margin:0 1px}
hr{width:26px;border:0;border-top:1px solid #5c5c5c;margin:2px 0}
`, `<button class="e">${ic('navx')}</button><button style="margin-top:6px">${ic('steer')}</button><button class="c" style="margin-top:2px">${ic('caret')}</button><hr><button>${ic('hand')}</button><button>${ic('zoom')}</button><button class="c">${ic('caret')}</button><button>${ic('orbit')}</button><button class="c">${ic('caret')}</button><hr><button>${ic('motion')}</button><button class="e" style="margin-top:auto;margin-bottom:1px">${ic('navm')}</button>`);

def('command-line', `
:host{position:absolute;left:387px;bottom:1px;width:1134px;height:26px;display:flex;align-items:center;background:#1f242e;color:#9da1a8;border-radius:3px}
.g{padding-left:4px;display:flex;width:56px;align-items:center;gap:3px}.g cad-icon:last-child{margin-left:9px}
.f{flex:1;display:flex;align-items:center;height:25px;background:#b3b3b3;color:#555;padding:0 4px;border-radius:2px}
input{flex:1;color:#111;font-family:"Liberation Mono",monospace;height:25px;padding-top:3px}
`, `<div class="g">${ic('grip')}${ic('xtab')}${ic('wrench')}</div><div class="f">${ic('prompt')}${ic('caretbig')}<input aria-label="命令" value="_PUBLISH">${ic('up')}</div>`);

def('dlg-button', `
:host{display:inline-flex}
button{width:100%;height:100%;background:#e1e1e1;border:1px solid #adadad;color:#000}
button:disabled{background:#ccc;border-color:#bfbfbf;color:#838383}
:host([primary]) button{border:2px solid #0078d7}
:host([tool]){width:24px;height:24px;flex:none}
`, el => `<button ${el.hasAttribute('off') ? 'disabled' : ''}><slot></slot></button>`);

def('dlg-combo', `
:host{display:grid;grid-template:100% / 1fr;height:21px;align-items:center;position:relative}
select{grid-area:1/1;appearance:none;width:100%;height:100%;border:1px solid #adadad;background:#e1e1e1;padding:0 2px;color:#000}
cad-icon{grid-area:1/1;justify-self:end;margin-right:3px;color:#444;pointer-events:none}
:host([open]) select{border-color:#0054a5;background:#cce4f7}
select:disabled{background:#ccc;border-color:#bfbfbf;color:#6d6d6d;opacity:1}
:host([off]) cad-icon{color:#a0a0a0}
ul{position:absolute;top:100%;left:0;right:0;margin:0;padding:0;list-style:none;background:#fff;border:1px solid #0078d7;border-top:0;box-shadow:3px 3px 3px #0008;z-index:3;height:50px;overflow:hidden}
li{height:12px;line-height:12px;padding:0 2px;white-space:nowrap;overflow:hidden}
li.on{background:#0078d7;color:#fff;height:13px;line-height:13px}
`, el => {
  const o = el.getAttribute('options').split('|');
  return `<select aria-label="${el.getAttribute('label')}" ${el.hasAttribute('off') ? 'disabled' : ''}>${o.map(t => `<option>${t}</option>`).join('')}</select>${ic('chev')}${el.hasAttribute('open') ? `<ul role="listbox">${o.map((t, i) => `<li role="option" ${i ? '' : 'class="on"'}>${t}</li>`).join('')}</ul>` : ''}`;
});

def('dlg-check', `
:host{display:flex;align-items:center}
label{display:flex;align-items:center;gap:4px;white-space:nowrap}
input{appearance:none;width:13px;height:13px;border:1px solid #333;background:#fff;display:grid;place-items:center}
input:checked::after{content:"";width:8px;height:4px;border:solid #333;border-width:0 0 1px 1px;transform:rotate(-45deg) translate(1px,-1px)}
input:disabled{border-color:#ccc}
:host([off]){color:#6d6d6d}
`, el => `<label><input type="checkbox" ${el.hasAttribute('on') ? 'checked' : ''} ${el.hasAttribute('off') ? 'disabled' : ''}><slot></slot></label>`);

def('publish-dialog', `
:host{display:flex;flex-direction:column;width:770px;height:629px;background:#f0f0f0;color:#000;font-family:"Noto Sans Mono CJK SC","Noto Sans CJK SC",monospace;font-size:12px;line-height:16px;position:relative}
header{height:30px;background:#fff;display:flex;align-items:center;padding:0 9px 2px 8px;gap:5px;font-family:"Noto Sans CJK SC",sans-serif}
header button{margin-left:auto}
header span{color:#111}
.body{padding:5px 9px 0 12px;display:flex;flex-direction:column;flex:1}
.top{display:flex;justify-content:space-between}
.left{width:358px}
.row{display:flex;align-items:center}
.src{height:24px;margin:1px 0}
.w{width:297px}
dlg-combo[open]{height:20px;margin-top:2px}
.auto{margin-top:41px;height:16px;padding-left:1px}
.tb{margin-top:6px;padding-left:1px;gap:6px}
fieldset{margin:0;border:1px solid #dcdcdc;min-width:0;padding:0}
legend{padding:0 3px;margin-left:5px;height:16px}
.info{width:384px;height:159px;margin:5px 2px 0 0}
.info .in{padding:2px 16px 0 9px}
.info p{margin:0;line-height:19px;height:19px;color:#a0a0a0;text-shadow:1px 1px #fff}
.info .row{height:19px;justify-content:space-between;margin-bottom:1px}
.info .row dlg-button{width:22px;height:19px}
.list{height:211px;margin-top:6px;border:1px solid #828790;background:#fff;display:flex;flex-direction:column;padding:1px}
table{border-collapse:collapse;table-layout:fixed;width:100%}
th{font-weight:400;text-align:left;height:23px;padding:2px 0 0 5px;border-left:1px solid #e5e5e5}
th:first-child{border:0}
td{height:17px;padding:0;line-height:17px}
td:nth-child(1){padding-left:5px}
td .c{display:flex;align-items:center;gap:1px;height:17px}
td .g{gap:7px}
td .box{appearance:none;width:13px;height:13px;border:1px solid #ccc;margin-left:14px}
.sb{margin-top:auto;height:17px;background:#f0f0f0;display:flex;align-items:center;justify-content:space-between;gap:6px;padding:0 5px}
.sb i{flex:1;height:100%;background:#cdcdcd}
.bot{display:flex;gap:7px}
.det{width:283px;height:159px;margin-top:5px;border:1px solid #a0a0a0}
.det h3{margin:0;height:24px;background:#a4a4a4;font-size:12px;display:flex;align-items:center;padding:0 11px 0 4px;gap:7px}
.det h3 span{flex:1}
.det div{line-height:19px;padding-left:2px}
.ctl{flex:1;height:162px;margin-top:3px}
.ctl .in{display:flex;padding:6px 33px 0 9px}
.ctl .a{width:174px;padding-top:3px}
.ctl label{display:block}
.spin{width:60px;height:22px;border:1px solid #7a7a7a;border-right-color:#adadad;border-bottom-color:#adadad;display:flex;background:#fff;margin:3px 0 10px}
.spin input{flex:1;width:30px;padding:0 0 3px 2px}
.spin div{display:flex;flex-direction:column;background:#f0f0f0;gap:1px;padding:1px;width:18px}
.spin button{flex:1;border:1px solid #adadad;background:#f0f0f0}
.ctl dlg-combo{height:22px;margin-top:1px}
.chk{margin-left:39px;display:grid;grid-auto-rows:28px}
.ib{margin-left:auto;display:flex;flex-direction:column;gap:11px}
footer{display:flex;align-items:center;padding:12px 5px 11px 14px;gap:16px}
footer button{margin-right:auto;gap:3px}
footer dlg-button{width:102px;height:22px}
.cursor{position:absolute;left:279px;top:124px;z-index:5}
`, `
<header>${ic('logodlg')}<span>发布</span><button aria-label="关闭">${ic('dclose')}</button></header>
<div class="body">
<div class="top"><div class="left"><div>图纸列表(S):</div>
<div class="row src"><dlg-combo class="w" label="图纸列表" options="无"></dlg-combo><dlg-button tool style="margin:0 6px 0 7px">${ic('dload')}</dlg-button><dlg-button tool off>${ic('dsave')}</dlg-button></div>
<div>发布为(T):</div><dlg-combo class="w" open label="发布为" options="页面设置中指定的绘图仪|DWF|DWFx|PDF"></dlg-combo>
<dlg-check class="auto" on>自动加载所有打开的图形(O)</dlg-check>
<div class="row tb"><dlg-button tool>${ic('sheetadd')}</dlg-button><dlg-button tool off style="margin-right:30px">${ic('sheetdel')}</dlg-button><dlg-button tool off>${ic('sheetup')}</dlg-button><dlg-button tool off style="margin-right:29px">${ic('sheetdown')}</dlg-button><dlg-button tool off>${ic('dpreview')}</dlg-button></div></div>
<fieldset class="info"><legend>发布选项信息</legend><div class="in"><div class="row"><span>位置: C:\\Users\\admin\\Documents\\</span><dlg-button>...</dlg-button></div>
<p>文件类型: 多页文件</p><p>命名: 提示输入名称</p><p>图层信息: 包含</p><p>合并控制: 直线覆盖</p><dlg-button off style="width:127px;height:22px;margin-top:14px">发布选项(O)...</dlg-button></div></fieldset></div>
<div class="list"><table><colgroup><col style="width:374px"><col style="width:74px"><col style="width:149px"><col></colgroup>
<tr><th>图纸名</th><th>三维 DWF</th><th>页面设置</th><th>状态</th></tr>
<tr><td><div class="c">${ic('smodel')}未保存 Drawing-模型</div></td><td><div class="c"><input class="box" type="checkbox" aria-label="三维 DWF"></div></td><td><div class="c g">${ic('pset')}&lt;默认: 无&gt;</div></td><td><div class="c g">${ic('ok')}无错误</div></td></tr>
<tr><td><div class="c">${ic('slayout')}未保存 Drawing-布局1</div></td><td></td><td><div class="c g">${ic('psetw')}&lt;默认: 无&gt;</div></td><td><div class="c g">${ic('bang')}未初始化布局</div></td></tr>
<tr><td><div class="c">${ic('slayout')}未保存 Drawing-布局2</div></td><td></td><td><div class="c g">${ic('psetw')}&lt;默认: 无&gt;</div></td><td><div class="c g">${ic('bang')}未初始化布局</div></td></tr></table>
<div class="sb">${ic('sl')}<i></i>${ic('sr')}</div></div>
<div class="bot"><section class="det"><h3><span>选定的图纸细节</span>${ic('dcopy')}${ic('dpic')}</h3>${['源图形','图形位置','布局名称','打印设备','打印大小','打印比例','页面设置详细信息'].map(t => `<div>${t}</div>`).join('')}</section>
<fieldset class="ctl"><legend>发布控制</legend><div class="in"><div class="a"><label for="n">打印份数(N):</label><div class="spin"><input id="n" value="1"><div><button aria-label="增加">${ic('spinup')}</button><button aria-label="减少">${ic('spindn')}</button></div></div>
<label>精度(E):</label><dlg-combo off label="精度" options="无"></dlg-combo></div>
<div class="chk"><dlg-check>包含打印戳记(A)</dlg-check><dlg-check on>在后台发布(B)</dlg-check><dlg-check off>完成后在查看器中打开(V)</dlg-check></div>
<div class="ib"><dlg-button tool>${ic('stamp')}</dlg-button><dlg-button tool>${ic('dexport')}</dlg-button></div></div></fieldset></div></div>
<footer><button>${ic('tri')}<span>隐藏细节(<u>I</u>)</span></button><dlg-button primary>发布(P)</dlg-button><dlg-button>取消</dlg-button><dlg-button>帮助(H)</dlg-button></footer>
<svg class="cursor" width="14" height="20"><path d="M1 1v15l3.500-3 2.500 6 2.500-1-2.500-5.500H12z" fill="#fff" stroke="#000"/></svg>`);

def('drawing-area', `
:host{display:flex;flex:1;justify-content:center;align-items:flex-start;background:#000;margin:0 3px;position:relative;min-height:0;overflow:hidden}
.dwg{position:absolute;left:0;top:0;width:100%;height:100%}
publish-dialog{margin-top:21px}
.mdi{position:absolute;right:10px;top:9px;display:flex;gap:8px}
.ime{position:absolute;right:275px;bottom:26px;width:60px;height:25px;background:#fff;border-radius:4px;color:#222;display:flex;align-items:center;justify-content:center;gap:3px;font-size:13px}
`, `<svg class="dwg" viewBox="6 181 1908 826" preserveAspectRatio="xMinYMin" fill="none" stroke="#fff"><circle cx="546.500" cy="442" r="154"/><path d="M1300 364.500h56.500v180H1300"/>
<path d="M25.500 937v49.500h50.500" stroke-width="1.500"/><path d="M22 982h8v8h-8zM27 920l6.500 7 6.500-7M33.500 927v6M80 972l13 13M93 972l-13 13"/></svg>
<publish-dialog></publish-dialog>
<div class="mdi"><button>${ic('mdimin')}</button><button>${ic('mdimax')}</button><button>${ic('mdiclose')}</button></div>
<view-cube></view-cube><nav-bar></nav-bar><command-line></command-line>
<div class="ime"><span>CH</span><svg width="11" height="14"><path d="M4 1c7 1 7 9 0 12 3-3 3-4-3-4 4-1 5-4 3-8z" fill="none" stroke="#222"/></svg><span>简</span></div>`);

const cell = (w, ...b) => `<div class="s" style="width:${w}px">${b.join('')}</div>`;
const bt = (n, on) => `<button ${on ? 'class="on"' : ''}>${ic(n)}</button>`;
const cr = `<button class="c">${ic('caretbig')}</button>`;
def('status-bar', `
:host{display:flex;height:32px;margin:0 3px;border-top:1px solid #3e4654;justify-content:space-between;color:#dcdfe3}
.tabs{display:flex;height:18px;padding-left:12px;color:#b8bcc4}
.tabs a{background:#2f3744;padding:0 11px;height:18px;border-radius:0 0 8px 8px;line-height:16px}
.tabs a.on{background:#3b4453;color:#fff;font-weight:700}
.tabs button{background:#2f3744;width:20px;margin-left:5px;height:16px;border-radius:4px 0 8px 0;color:#9da1a9}
.tools{display:flex;gap:2px;padding-top:1px}
.s{display:flex;height:24px;background:#3b4453;align-items:center;justify-content:space-around;white-space:nowrap;flex:none}
.s button{width:23px;height:22px}.s button.c{width:14px}
.on{background:#5f90c4;color:#fff}
.tabs .on{border-radius:0 0 8px 8px}
`, `<nav class="tabs"><a href="#" class="on">模型</a><a href="#">布局1</a><a href="#">布局2</a><button aria-label="新建布局">${ic('plus')}</button></nav>
<div class="tools">${cell(180, '<span style="margin-left:12px">396.1983, 1084.4335, 0.0000</span>')}${cell(31, '<button style="width:auto">模型</button>')}${cell(65, bt('grid'), bt('snap'), cr)}${cell(25, bt('infer'))}${cell(22, bt('dyn', 1))}${cell(23, bt('ortho'))}${cell(38, bt('polar', 1), cr)}${cell(39, bt('iso'), cr)}${cell(22, bt('otrack', 1))}${cell(38, bt('osnap', 1), cr)}${cell(24, bt('lw'))}${cell(22, bt('trans', 1))}${cell(24, bt('cycle'))}${cell(40, bt('osnap3'), cr)}${cell(23, bt('ducs', 1))}${cell(38, bt('selfilt'), cr)}${cell(39, bt('gizmo', 1), cr)}${cell(147, bt('annovis', 1), bt('annoauto'), bt('anno'), '<span style="margin-left:4px">1:1 / 100%</span>', cr)}${cell(40, bt('gear'), cr)}${cell(24, bt('bigplus'))}${cell(98, bt('units'), '<span style="flex:1;padding-left:7px">小数</span>', cr)}${cell(24, bt('qprops'))}${cell(42, bt('uilock'), cr)}${cell(24, bt('isolate'))}${cell(22, bt('hw', 1))}${cell(24, bt('full'))}${cell(25, bt('menu'))}</div>`);

def('site-mark', `
:host{position:absolute;right:5px;bottom:2px;width:150px;height:60px;display:block;opacity:.6;pointer-events:none}
svg{display:block;overflow:visible}
.a{font:700 21px "Noto Sans CJK SC",sans-serif;fill:#1a63ad}.b{font:700 15px "Liberation Sans",sans-serif;fill:#1f9a4b}
`, `<svg width="150" height="60" viewBox="0 -8 150 60"><path d="M2 30C2 14 16 4 38 2 22 8 10 16 8 32z" fill="#1f7fd0"/><path d="M6 32c2-12 12-16 26-16-12 2-18 6-18 14 0 6 8 8 14 4-6 6-20 8-22-2z" fill="#2e8fd8"/><path d="M0 46c20-2 32-10 30-20l-8 2 2-6c10-6 14 0 11 8C31 41 18 47 0 46z" fill="#2aa34a"/>
<text class="a" x="40" y="22">极光下载站</text><text class="b" x="41" y="42">www.xz7.com</text></svg>`);

def('note-arrows', `
:host{position:absolute;inset:0;pointer-events:none;z-index:9}svg{display:block;width:100%;height:100%;filter:drop-shadow(2px 3px 2px #0007)}
`, `<svg fill="#f00" stroke="#f00"><path d="M485 246 566 282" stroke-width="2.500"/><path stroke="none" d="M584 291l-28-4 9-4-3-9z"/><path d="M922 769 996 794" stroke-width="3"/><path stroke="none" d="M1017 802l-28-1 7-5-3-8z"/></svg>`);

def('cad-app', `
:host{display:block;height:100vh;position:relative;overflow:hidden}
main{display:flex;flex-direction:column;height:calc(100vh - 5px);margin:0 2px;border:1px solid #1490cc;background:#222933}
`, `<main><cad-titlebar></cad-titlebar><ribbon-tabs></ribbon-tabs><cad-ribbon></cad-ribbon><file-tabs></file-tabs><drawing-area></drawing-area><status-bar></status-bar></main><site-mark></site-mark><note-arrows></note-arrows>`);
</script>
</body>
</html>
